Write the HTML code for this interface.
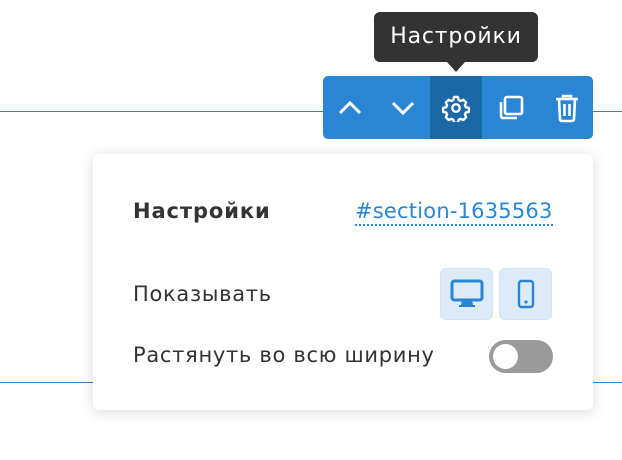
<!DOCTYPE html>
<html><head><meta charset="utf-8"><style>
body{margin:0;width:622px;height:460px;background:#fff;position:relative;overflow:hidden;font-family:"DejaVu Sans","Liberation Sans",sans-serif;}
.line{position:absolute;left:0;width:622px;height:1px;background:#2a86d4;}
.tip{position:absolute;left:374px;top:12px;width:164px;height:50px;background:#333;border-radius:6px;color:#fff;font-size:22px;letter-spacing:0.8px;line-height:50px;text-align:center;}
.tip:after{content:"";position:absolute;left:73px;bottom:-10px;border:9px solid transparent;border-top:10px solid #333;border-bottom:0;}
.bar{position:absolute;left:323px;top:76px;width:270px;height:63px;background:#2a86d4;border-radius:5px;}
.bar .b{position:absolute;top:0;width:53px;height:63px;display:flex;align-items:center;justify-content:center;}
.panel{position:absolute;left:93px;top:154px;width:500px;height:256px;background:#fff;border-radius:6px;box-shadow:0 2px 14px rgba(0,0,0,.15);}
.t{position:absolute;font-size:21px;letter-spacing:0.7px;color:#333;white-space:nowrap;}
.dev{position:absolute;top:114px;width:53px;height:52px;background:#dcebf7;border:1px solid #d7e2ec;border-radius:6px;display:flex;align-items:center;justify-content:center;box-sizing:border-box;}
</style></head><body>
<div class="line" style="top:111px"></div>
<div class="line" style="top:382px"></div>
<div class="tip">Настройки</div>
<div class="bar">
 <div class="b" style="left:0"><svg width="28" height="28" viewBox="0 0 28 28"><path d="M4 19L14 9l10 10" fill="none" stroke="#fff" stroke-width="3"/></svg></div>
 <div class="b" style="left:53px"><svg width="28" height="28" viewBox="0 0 28 28"><path d="M4 9l10 10 10-10" fill="none" stroke="#fff" stroke-width="3"/></svg></div>
 <div class="b" style="left:107px;width:52px;background:#1c68a6"><svg width="28" height="28" viewBox="0 0 24 24"><circle cx="12" cy="12" r="3.2" fill="none" stroke="#fff" stroke-width="2"/><path d="M10.3 2.5h3.4l.5 2.6 1.7.9 2.4-1.1 2.4 2.4-1.1 2.4.9 1.7 2.6.5v3.4l-2.6.5-.9 1.7 1.1 2.4-2.4 2.4-2.4-1.1-1.7.9-.5 2.6h-3.4l-.5-2.6-1.7-.9-2.4 1.1-2.4-2.4 1.1-2.4-.9-1.7-2.6-.5v-3.4l2.6-.5.9-1.7-1.1-2.4 2.4-2.4 2.4 1.1 1.7-.9z" fill="none" stroke="#fff" stroke-width="2" stroke-linejoin="round"/></svg></div>
 <div class="b" style="left:161px"><svg width="30" height="30" viewBox="0 0 30 30"><rect x="9" y="4" width="17" height="17" rx="2" fill="none" stroke="#fff" stroke-width="2.6"/><path d="M5 9v14a2 2 0 0 0 2 2h14" fill="none" stroke="#fff" stroke-width="2.6"/></svg></div>
 <div class="b" style="left:217px"><svg width="26" height="30" viewBox="0 0 26 30"><path d="M2 6h22M9 6V3h8v3M5 6l1 20a2 2 0 0 0 2 2h10a2 2 0 0 0 2-2l1-20M10.5 11v12M15.5 11v12" fill="none" stroke="#fff" stroke-width="2.6"/></svg></div>
</div>
<div class="panel">
 <div class="t" style="left:40px;top:45px;font-weight:bold;letter-spacing:0.9px">Настройки</div>
 <div class="t" style="left:262px;top:45px;color:#2a86d4;border-bottom:2px dotted #2a86d4;line-height:25px;letter-spacing:0.2px">#section-1635563</div>
 <div class="t" style="left:40px;top:128px">Показывать</div>
 <div class="dev" style="left:347px"><svg width="34" height="30" viewBox="0 0 34 30"><rect x="2" y="2" width="30" height="19" rx="2.5" fill="none" stroke="#2a86d4" stroke-width="3"/><path d="M13 21l-1 5h10l-1-5M9 27h16" fill="#2a86d4" stroke="#2a86d4" stroke-width="2"/></svg></div>
 <div class="dev" style="left:406px"><svg width="18" height="30" viewBox="0 0 18 30"><rect x="2" y="2" width="14" height="26" rx="2.5" fill="none" stroke="#2a86d4" stroke-width="2.4"/><circle cx="9" cy="23" r="1.6" fill="#2a86d4"/></svg></div>
 <div class="t" style="left:40px;top:189px">Растянуть во всю ширину</div>
 <div style="position:absolute;left:396px;top:186px;width:64px;height:33px;border-radius:17px;background:#9a9a9a"><div style="position:absolute;left:4px;top:4px;width:25px;height:25px;border-radius:50%;background:#fff"></div></div>
</div>
</body></html>
